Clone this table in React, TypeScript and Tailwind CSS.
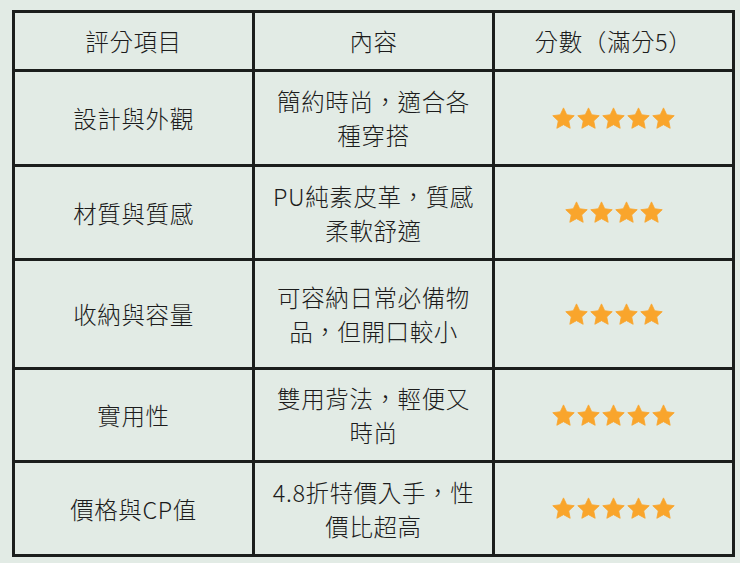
import React from "react";

const rows = [
  { item: "設計與外觀", lines: ["簡約時尚，適合各", "種穿搭"], stars: 5, h: "h-[92px]" },
  { item: "材質與質感", lines: ["PU純素皮革，質感", "柔軟舒適"], stars: 4, h: "h-[91px]" },
  { item: "收納與容量", lines: ["可容納日常必備物", "品，但開口較小"], stars: 4, h: "h-[106px]" },
  { item: "實用性", lines: ["雙用背法，輕便又", "時尚"], stars: 5, h: "h-[90px]" },
  { item: "價格與CP值", lines: ["4.8折特價入手，性", "價比超高"], stars: 5, h: "h-[91px]" },
];

function StarIcon() {
  return (
    <svg viewBox="0 0 24 24" className="h-[25px] w-[25px]" aria-hidden>
      <path
        d="M12 1.8l3.1 6.6 7.2.9-5.3 5 1.4 7.1L12 17.9l-6.4 3.5 1.4-7.1-5.3-5 7.2-.9z"
        fill="#f9a52c"
        stroke="#f9a52c"
        strokeWidth="0.8"
        strokeLinejoin="round"
      />
    </svg>
  );
}

function Cell({ children, className = "" }: { children: React.ReactNode; className?: string }) {
  return (
    <div className={`flex items-center justify-center bg-[#e2ebe5] text-center ${className}`}>
      {children}
    </div>
  );
}

export default function App() {
  return (
    <div
      className="min-h-[563px] w-[740px] bg-[#e2ebe5] pl-[12px] pt-[10px] text-[23.5px] font-light leading-[34px] tracking-[0.6px] text-[#1c1c1c]"
      style={{ fontFamily: '"Noto Sans CJK TC", "Noto Sans", sans-serif' }}
    >
      <div className="grid w-[723px] grid-cols-3 gap-[3px] bg-[#1b1e1c] p-[3px]">
        <Cell className="h-[56px]">評分項目</Cell>
        <Cell className="h-[56px]">內容</Cell>
        <Cell className="h-[56px]">分數（滿分5）</Cell>
        {rows.map((r) => (
          <React.Fragment key={r.item}>
            <Cell className={r.h}>{r.item}</Cell>
            <Cell className={r.h}>
              <div>
                {r.lines.map((l) => (
                  <div key={l}>{l}</div>
                ))}
              </div>
            </Cell>
            <Cell className={r.h}>
              <div className="flex">
                {Array.from({ length: r.stars }).map((_, i) => (
                  <StarIcon key={i} />
                ))}
              </div>
            </Cell>
          </React.Fragment>
        ))}
      </div>
    </div>
  );
}
